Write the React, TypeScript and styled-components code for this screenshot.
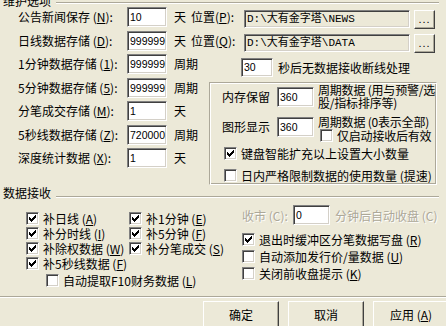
import React from "react";
import styled, { createGlobalStyle } from "styled-components";

const GlobalStyle = createGlobalStyle`
  html, body {
    margin: 0;
    padding: 0;
    background: #ece9d8;
  }
  body {
    font-family: "Noto Sans CJK SC", "Liberation Sans", sans-serif;
    font-size: 12px;
    color: #000;
  }
`;

const Page = styled.div`
  width: 446px;
  height: 326px;
  overflow: hidden;
  background: #ece9d8;
`;

const SectionHead = styled.div<{ $mt: number }>`
  display: flex;
  align-items: flex-start;
  height: 12px;
  line-height: 12px;
  margin-top: ${(p) => p.$mt}px;
  padding: 0 7px 0 3px;
  white-space: nowrap;
`;

const HeadRule = styled.div<{ $offset: number }>`
  flex: 1;
  margin-left: 5px;
  margin-top: ${(p) => p.$offset}px;
  border-top: 1px solid #aca899;
  border-bottom: 1px solid #fff;
`;

const Rows = styled.div`
  display: flex;
  flex-direction: column;
  gap: 3.5px;
  padding-left: 18px;
`;

const FormRow = styled.div`
  display: flex;
  align-items: center;
  height: 20px;
  white-space: nowrap;
`;

const Label = styled.span<{ $w: number }>`
  width: ${(p) => p.$w}px;
  flex-shrink: 0;
  line-height: 20px;
`;

const Unit = styled.span`
  margin-left: 7px;
  line-height: 20px;
`;

const Field = styled.div<{ $w: number; $h?: number }>`
  box-sizing: border-box;
  width: ${(p) => p.$w}px;
  height: ${(p) => p.$h ?? 20}px;
  flex-shrink: 0;
  border: 1px solid;
  border-color: #808080 #fff #fff #808080;
  box-shadow: inset 1px 1px #404040, inset -1px -1px #d4d0c8;
  background: #fff;
  padding: 0 0 0 2px;
  font-family: "Liberation Sans", Arial, sans-serif;
  font-size: 10.5px;
  line-height: ${(p) => (p.$h ?? 20) - 2}px;
  white-space: nowrap;
`;

const PlaceLabel = styled.span`
  width: 53px;
  margin-left: 5px;
  line-height: 20px;
`;

const PathField = styled.div`
  box-sizing: border-box;
  width: 166px;
  height: 18px;
  align-self: flex-start;
  margin-top: 3px;
  border: 1px solid;
  border-color: #808080 #fff #fff #808080;
  box-shadow: inset 1px 1px #404040, inset -1px -1px #d4d0c8;
  background: #ece9d8;
  padding: 0 2px;
  font-family: "Liberation Mono", "Noto Sans CJK SC", monospace;
  font-size: 11px;
  line-height: 16px;
`;

const Browse = styled.div`
  box-sizing: border-box;
  width: 21px;
  height: 19px;
  align-self: flex-start;
  margin: 3px 0 0 4px;
  border: 1px solid;
  border-color: #fff #404040 #404040 #fff;
  box-shadow: inset -1px -1px #aca899;
  font-family: "Liberation Sans", sans-serif;
  font-size: 11px;
  line-height: 17px;
  text-align: center;
  letter-spacing: 1px;
`;

const Split = styled.div`
  display: flex;
  margin-top: 3.5px;
`;

const LeftCol = styled.div`
  box-sizing: border-box;
  width: 209px;
  padding-left: 18px;
  display: flex;
  flex-direction: column;
  gap: 3.5px;
`;

const RightCol = styled.div`
  width: 228px;
  display: flex;
  flex-direction: column;
`;

const TimeoutRow = styled.div`
  display: flex;
  align-items: center;
  height: 19px;
  margin-top: 4px;
  padding-left: 32px;
  white-space: nowrap;
`;

const Text = styled.span<{ $ml?: number }>`
  margin-left: ${(p) => p.$ml ?? 0}px;
`;

const InnerBox = styled.div`
  box-sizing: border-box;
  height: 103px;
  margin-top: 5px;
  border: 1px solid;
  border-color: #aca899 #fff #fff #aca899;
  box-shadow: inset 1px 1px #fff, inset -1px -1px #aca899;
  padding: 4px 0 0 12px;
  white-space: nowrap;
`;

const InnerRow = styled.div<{ $mt?: number }>`
  display: flex;
  align-items: flex-start;
  margin-top: ${(p) => p.$mt ?? 0}px;
`;

const InnerLabel = styled.span`
  width: 55px;
  line-height: 20px;
`;

const Note = styled.div<{ $mt: number }>`
  margin: ${(p) => p.$mt}px 0 0 4px;
  line-height: 12.5px;
  letter-spacing: -0.2px;
`;

const CheckLine = styled.label<{ $h?: number; $ml?: number; $mt?: number }>`
  display: flex;
  align-items: center;
  gap: 4px;
  height: ${(p) => p.$h ?? 13}px;
  margin-left: ${(p) => p.$ml ?? 0}px;
  margin-top: ${(p) => p.$mt ?? 0}px;
  line-height: ${(p) => p.$h ?? 13}px;
  white-space: nowrap;
`;

const Box = styled.span`
  box-sizing: border-box;
  width: 13px;
  height: 13px;
  flex-shrink: 0;
  display: flex;
  align-items: center;
  justify-content: center;
  border: 1px solid;
  border-color: #808080 #fff #fff #808080;
  box-shadow: inset 1px 1px #404040, inset -1px -1px #d4d0c8;
  background: #fff;
`;

const DataBody = styled.div`
  display: flex;
  margin-top: 6px;
`;

const DataLeft = styled.div`
  box-sizing: border-box;
  width: 242px;
  padding: 6px 0 0 26px;
`;

const CheckGrid = styled.div`
  display: grid;
  grid-template-columns: 103px auto;
  grid-auto-rows: 15px;
`;

const DataRight = styled.div`
  display: flex;
  flex-direction: column;
`;

const CloseRow = styled.div`
  display: flex;
  align-items: center;
  height: 20px;
  white-space: nowrap;
`;

const Disabled = styled.span<{ $w?: number; $ml?: number }>`
  width: ${(p) => (p.$w ? `${p.$w}px` : "auto")};
  margin-left: ${(p) => p.$ml ?? 0}px;
  color: #aca899;
  text-shadow: 1px 1px #fff;
`;

const Separator = styled.div`
  margin-top: 8px;
  border-top: 1px solid #aca899;
  border-bottom: 1px solid #fff;
`;

const Footer = styled.div`
  display: flex;
  gap: 9px;
  margin-top: 3px;
  padding-left: 203px;
`;

const Button = styled.div`
  box-sizing: border-box;
  width: 76px;
  height: 28px;
  flex-shrink: 0;
  border: 1px solid;
  border-color: #fff #404040 #404040 #fff;
  box-shadow: inset -1px -1px #aca899;
  text-align: center;
  line-height: 26px;
`;

const U = styled.span`
  text-decoration: underline;
`;

function Check({ on }: { on?: boolean }) {
  const starts = [2, 3, 4, 3, 2, 1, 0];
  return (
    <Box>
      {on && (
        <svg width="7" height="7" viewBox="0 0 7 7" shapeRendering="crispEdges">
          <path d={starts.map((r, c) => `M${c} ${r}h1v3h-1z`).join("")} fill="#000" />
        </svg>
      )}
    </Box>
  );
}

const storeRows = [
  { label: "1分钟数据存储", key: "1", value: "999999", unit: "周期" },
  { label: "5分钟数据存储", key: "5", value: "999999", unit: "周期" },
  { label: "分笔成交存储", key: "M", value: "1", unit: "天" },
  { label: "5秒线数据存储", key: "Z", value: "720000", unit: "周期" },
  { label: "深度统计数据", key: "X", value: "1", unit: "天" },
];

const fillItems = [
  { text: "补日线", key: "A" },
  { text: "补1分钟", key: "E" },
  { text: "补分时线", key: "I" },
  { text: "补5分钟", key: "F" },
  { text: "补除权数据", key: "W" },
  { text: "补分笔成交", key: "S" },
  { text: "补5秒线数据", key: "F" },
];

export default function App() {
  return (
    <Page>
      <GlobalStyle />
      <SectionHead $mt={-5}>
        维护选项
        <HeadRule $offset={7} />
      </SectionHead>

      <Rows>
        <FormRow>
          <Label $w={109}>
            公告新闻保存 (<U>N</U>):
          </Label>
          <Field $w={40}>10</Field>
          <Unit>天</Unit>
          <PlaceLabel>
            位置(<U>P</U>):
          </PlaceLabel>
          <PathField>D:\大有金字塔\NEWS</PathField>
          <Browse>...</Browse>
        </FormRow>
        <FormRow>
          <Label $w={109}>
            日线数据存储 (<U>D</U>):
          </Label>
          <Field $w={40}>999999</Field>
          <Unit>天</Unit>
          <PlaceLabel>
            位置(<U>Q</U>):
          </PlaceLabel>
          <PathField>D:\大有金字塔\DATA</PathField>
          <Browse>...</Browse>
        </FormRow>
      </Rows>

      <Split>
        <LeftCol>
          {storeRows.map((r) => (
            <FormRow key={r.label}>
              <Label $w={109}>
                {r.label} (<U>{r.key}</U>):
              </Label>
              <Field $w={40}>{r.value}</Field>
              <Unit>{r.unit}</Unit>
            </FormRow>
          ))}
        </LeftCol>
        <RightCol>
          <TimeoutRow>
            <Field $w={32} $h={19}>30</Field>
            <Text $ml={5}>秒后无数据接收断线处理</Text>
          </TimeoutRow>
          <InnerBox>
            <InnerRow>
              <InnerLabel>内存保留</InnerLabel>
              <Field $w={37}>360</Field>
              <Note $mt={-3}>
                周期数据 (用与预警/选
                <br />
                股/指标排序等)
              </Note>
            </InnerRow>
            <InnerRow $mt={8}>
              <InnerLabel>图形显示</InnerLabel>
              <Field $w={37}>360</Field>
              <Note $mt={-1}>
                周期数据 (0表示全部)
                <CheckLine $ml={2}>
                  <Check />
                  仅启动接收后有效
                </CheckLine>
              </Note>
            </InnerRow>
            <CheckLine $ml={2} $mt={5}>
              <Check on />
              键盘智能扩充以上设置大小数量
            </CheckLine>
            <CheckLine $ml={2} $mt={9}>
              <Check />
              日内严格限制数据的使用数量 (提速)
            </CheckLine>
          </InnerBox>
        </RightCol>
      </Split>

      <SectionHead $mt={2}>
        数据接收
        <HeadRule $offset={9} />
      </SectionHead>

      <DataBody>
        <DataLeft>
          <CheckGrid>
            {fillItems.map((f) => (
              <CheckLine key={f.text} $h={15}>
                <Check on />
                <span>
                  {f.text} (<U>{f.key}</U>)
                </span>
              </CheckLine>
            ))}
          </CheckGrid>
          <CheckLine $h={15} $ml={20} $mt={2}>
            <Check />
            <span>
              自动提取F10财务数据 (<U>L</U>)
            </span>
          </CheckLine>
        </DataLeft>
        <DataRight>
          <CloseRow>
            <Disabled $w={51}>收市 (C):</Disabled>
            <Field $w={37}>0</Field>
            <Disabled $ml={5}>分钟后自动收盘 (C)</Disabled>
          </CloseRow>
          <CheckLine $h={17} $mt={6}>
            <Check on />
            <span>
              退出时缓冲区分笔数据写盘 (<U>R</U>)
            </span>
          </CheckLine>
          <CheckLine $h={17}>
            <Check />
            <span>
              自动添加发行价/量数据 (<U>U</U>)
            </span>
          </CheckLine>
          <CheckLine $h={17}>
            <Check />
            <span>
              关闭前收盘提示 (<U>K</U>)
            </span>
          </CheckLine>
        </DataRight>
      </DataBody>

      <Separator />
      <Footer>
        <Button>确定</Button>
        <Button>取消</Button>
        <Button>
          应用 (<U>A</U>)
        </Button>
      </Footer>
    </Page>
  );
}
